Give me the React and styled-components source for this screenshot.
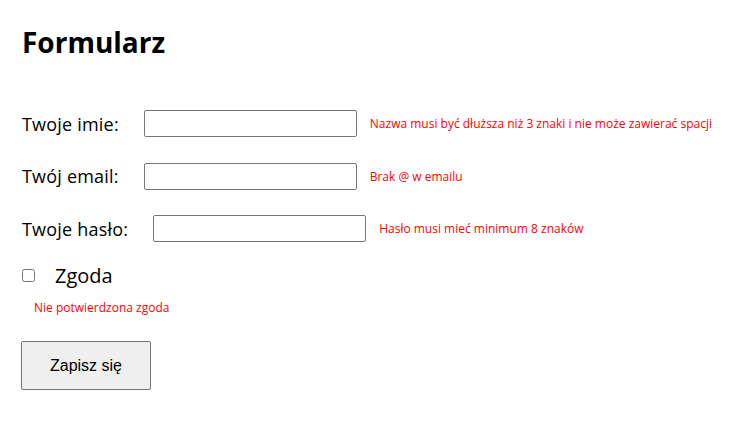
import React from "react";
import styled, { createGlobalStyle } from "styled-components";

const Global = createGlobalStyle`
  html, body { margin: 0; padding: 0; background: #fff; }
  body { font-family: "Open Sans", "Noto Sans", sans-serif; color: #000; }
`;

const Page = styled.div`
  padding: 20px 22px;
`;

const Title = styled.h1`
  margin: 0 0 20px;
  font-size: 28px;
  font-weight: 700;
  line-height: 44px;
`;

const Form = styled.form`
  display: flex;
  flex-direction: column;
  align-items: flex-start;
`;

const Row = styled.div`
  display: flex;
  align-items: center;
  height: 26px;
  margin-top: 26.5px;
`;

const Label = styled.label`
  font-size: 18px;
  letter-spacing: 0.2px;
  margin-right: 25px;
  white-space: nowrap;
`;

const Input = styled.input`
  box-sizing: border-box;
  width: 213px;
  height: 27px;
  border: 1px solid #767676;
  border-radius: 2px;
  margin: 0;
  padding: 0 4px;
`;

const Error = styled.span`
  color: #ff0000;
  font-size: 12px;
  margin-left: 13px;
  white-space: nowrap;
`;

const CheckRow = styled.div`
  display: flex;
  align-items: center;
  height: 26px;
  margin-top: 20.5px;
`;

const Check = styled.input`
  width: 13px;
  height: 13px;
  margin: 0 20px 0 0;
`;

const CheckLabel = styled.label`
  font-size: 20px;
`;

const CheckError = styled.div`
  color: #ff0000;
  font-size: 12px;
  margin: 11px 0 0 12px;
`;

const Button = styled.button`
  margin: 25px 0 0 -1px;
  width: 130px;
  height: 49px;
  box-sizing: border-box;
  background: #efefef;
  border: 1px solid #767676;
  border-radius: 2px;
  font-family: "Liberation Sans", Arial, sans-serif;
  font-size: 16px;
  color: #000;
`;

export default function App() {
  return (
    <Page>
      <Global />
      <Title>Formularz</Title>
      <Form onSubmit={(e) => e.preventDefault()}>
        <Row>
          <Label>Twoje imie:</Label>
          <Input type="text" />
          <Error>Nazwa musi być dłuższa niż 3 znaki i nie może zawierać spacji</Error>
        </Row>
        <Row>
          <Label>Twój email:</Label>
          <Input type="text" />
          <Error>Brak @ w emailu</Error>
        </Row>
        <Row>
          <Label>Twoje hasło:</Label>
          <Input type="password" />
          <Error>Hasło musi mieć minimum 8 znaków</Error>
        </Row>
        <CheckRow>
          <Check type="checkbox" />
          <CheckLabel>Zgoda</CheckLabel>
        </CheckRow>
        <CheckError>Nie potwierdzona zgoda</CheckError>
        <Button type="submit">Zapisz się</Button>
      </Form>
    </Page>
  );
}
